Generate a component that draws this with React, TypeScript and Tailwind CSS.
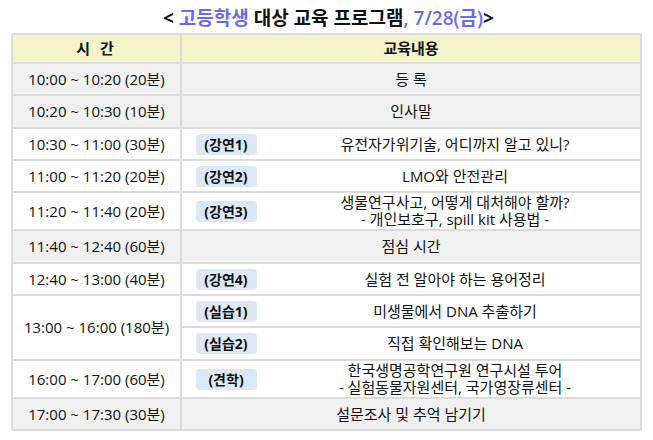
import React from "react";

type Row = { time: string; badge?: string; content: React.ReactNode; gray?: boolean; h: number };

const rows: Row[] = [
  { time: "10:00 ~ 10:20 (20분)", content: "등 록", gray: true, h: 32 },
  { time: "10:20 ~ 10:30 (10분)", content: "인사말", gray: true, h: 33 },
  { time: "10:30 ~ 11:00 (30분)", badge: "(강연1)", content: "유전자가위기술, 어디까지 알고 있니?", h: 32 },
  { time: "11:00 ~ 11:20 (20분)", badge: "(강연2)", content: "LMO와 안전관리", h: 32 },
  {
    time: "11:20 ~ 11:40 (20분)",
    badge: "(강연3)",
    content: (
      <>
        생물연구사고, 어떻게 대처해야 할까?
        <br />- 개인보호구, spill kit 사용법 -
      </>
    ),
    h: 38,
  },
  { time: "11:40 ~ 12:40 (60분)", content: "점심 시간", gray: true, h: 33 },
  { time: "12:40 ~ 13:00 (40분)", badge: "(강연4)", content: "실험 전 알아야 하는 용어정리", h: 32 },
];

const cell = "border-2 border-[#dcdcdc] p-0";

function Badge({ text }: { text: string }) {
  return (
    <span className="inline-flex h-[21px] w-[61px] items-center justify-center rounded-[4px] bg-[#dde8f5] text-[14px] font-bold text-[#111]">
      {text}
    </span>
  );
}

export default function App() {
  return (
    <div
      className="h-[440px] w-[653px] bg-white text-[#111]"
      style={{ fontFamily: '"Open Sans", "Noto Sans CJK KR", sans-serif' }}
    >
      <div className="flex h-[33px] items-center justify-center pl-[4px] pt-[3px] text-[19px] font-bold leading-none">
        <span>&lt;&nbsp;</span>
        <span className="text-[#6a6af0]">고등학생</span>
        <span>&nbsp;대상 교육 프로그램</span>
        <span className="font-semibold text-[#6a6af0]">, 7/28(금)</span>
        <span>&gt;</span>
      </div>
      <table className="ml-[11px] w-[631px] table-fixed border-collapse text-[15px] leading-[17px]">
        <colgroup>
          <col className="w-[169px]" />
          <col className="w-[89px]" />
          <col />
        </colgroup>
        <tbody>
          <tr className="h-[29px] bg-[#f3f5c8] font-bold">
            <td className={`${cell} text-center tracking-[0.2em]`}>시 간</td>
            <td className={`${cell} text-center`} colSpan={2}>
              교육내용
            </td>
          </tr>
          {rows.map((r) => (
            <tr key={r.time} className={r.gray ? "bg-[#f0f0f0]" : "bg-white"} style={{ height: r.h }}>
              <td className={`${cell} text-center`}>{r.time}</td>
              {r.badge ? (
                <>
                  <td className={`${cell} border-r-0 text-center`}>
                    <Badge text={r.badge} />
                  </td>
                  <td className={`${cell} border-l-0 text-center`}>{r.content}</td>
                </>
              ) : (
                <td className={`${cell} text-center`} colSpan={2}>
                  {r.content}
                </td>
              )}
            </tr>
          ))}
          <tr className="h-[32px]">
            <td className={`${cell} text-center`} rowSpan={2}>
              13:00 ~ 16:00 (180분)
            </td>
            <td className={`${cell} border-r-0 text-center`}>
              <Badge text="(실습1)" />
            </td>
            <td className={`${cell} border-l-0 text-center`}>미생물에서 DNA 추출하기</td>
          </tr>
          <tr className="h-[33px]">
            <td className={`${cell} border-r-0 text-center`}>
              <Badge text="(실습2)" />
            </td>
            <td className={`${cell} border-l-0 text-center`}>직접 확인해보는 DNA</td>
          </tr>
          <tr className="h-[38px]">
            <td className={`${cell} text-center`}>16:00 ~ 17:00 (60분)</td>
            <td className={`${cell} border-r-0 text-center`}>
              <Badge text="(견학)" />
            </td>
            <td className={`${cell} border-l-0 text-center`}>
              한국생명공학연구원 연구시설 투어
              <br />- 실험동물자원센터, 국가영장류센터 -
            </td>
          </tr>
          <tr className="h-[32px] bg-[#f0f0f0]">
            <td className={`${cell} text-center`}>17:00 ~ 17:30 (30분)</td>
            <td className={`${cell} text-center`} colSpan={2}>
              설문조사 및 추억 남기기
            </td>
          </tr>
        </tbody>
      </table>
    </div>
  );
}
